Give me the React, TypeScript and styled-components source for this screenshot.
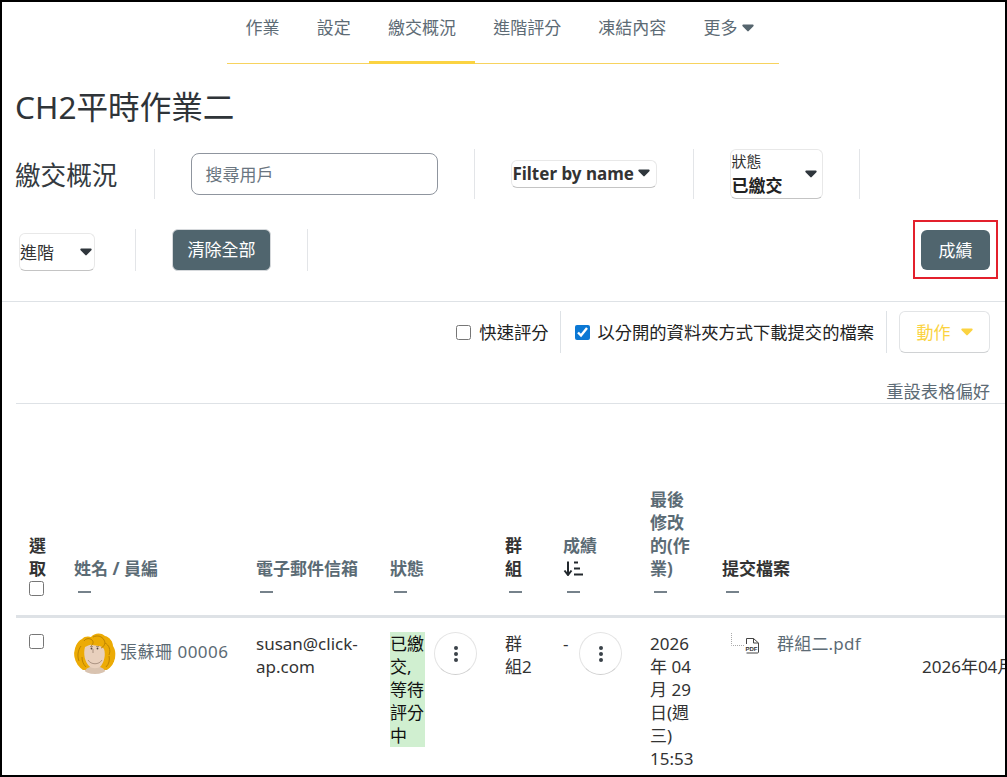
import React from 'react'
import styled, { createGlobalStyle } from 'styled-components'

const GlobalStyle = createGlobalStyle`
  html, body {
    margin: 0;
    padding: 0;
    background: #fff;
  }
  body {
    font-family: "Noto Sans", "Noto Sans CJK TC", sans-serif;
    font-size: 17px;
    line-height: 23px;
    color: #333;
  }
`

const TABS = ['作業', '設定', '繳交概況', '進階評分', '凍結內容']

function Caret({ className }: { className?: string }) {
  return (
    <svg className={className} viewBox="0 0 12 8" width="12" height="8" aria-hidden="true">
      <path d="M1.2 0.6h9.6c.8 0 1.2 1 .6 1.6L6.7 7.1c-.4.4-1 .4-1.4 0L.6 2.2C0 1.6.4.6 1.2.6z" fill="currentColor" />
    </svg>
  )
}

function Avatar() {
  return (
    <AvatarSvg viewBox="0 0 42 42" aria-hidden="true">
      <clipPath id="avatar-clip">
        <circle cx="21" cy="21" r="21" />
      </clipPath>
      <g clipPath="url(#avatar-clip)">
        <path d="M0 24C0 16 3 9 8 7c2-3 7-3 9-2 3-4 10-5 14-1 5 1 8 6 8 10 3 4 3 11 1 16-1 4-4 7-7 8H8C3 36 0 30 0 24z" fill="#ecab05" />
        <path d="M10 42c0-4 3-6 6-7h10c3 1 6 3 6 7z" fill="#d9c3b0" />
        <path d="M11 15c3-1 5-3 7-2 5 1 9 0 12 4 2 6 0 13-3 17-3 3-9 3-12 0-4-4-6-12-4-19z" fill="#e8d0bd" />
        <path d="M14 28c3 5 11 5 14 0" fill="none" stroke="#9c8474" strokeWidth="0.8" />
        <path d="M19 17v4M16 14.5h3M22 14.5h3" fill="none" stroke="#8c7565" strokeWidth="0.7" />
        <circle cx="17.5" cy="16.5" r="0.9" fill="#4f433b" />
        <circle cx="23.5" cy="16.5" r="0.9" fill="#4f433b" />
        <path d="M10 9c2-3 6-3 8-1 2 2 1 4-1 6M19 5c4-2 9-1 11 3 2 3 0 7-3 8M31 11c4 2 6 7 4 12M7 14c-3 4-4 10-2 15M35 24c1 4 0 8-3 11M8 25c0 4 1 7 4 10" fill="none" stroke="#b67f03" strokeWidth="0.9" />
      </g>
    </AvatarSvg>
  )
}

function Kebab() {
  return (
    <RoundButton type="button" aria-label="更多">
      <svg viewBox="0 0 4 16" width="4" height="16" aria-hidden="true">
        <circle cx="2" cy="2" r="2" fill="#3a4249" />
        <circle cx="2" cy="8" r="2" fill="#3a4249" />
        <circle cx="2" cy="14" r="2" fill="#3a4249" />
      </svg>
    </RoundButton>
  )
}

function SortIcon() {
  return (
    <SortSvg viewBox="0 0 20 15" aria-hidden="true">
      <path d="M5 0.5v13M1.5 9.5L5 14l3.5-4.5" fill="none" stroke="#22282d" strokeWidth="2" />
      <path d="M11 1.5h4M11 7.5h6M11 13.5h9" fill="none" stroke="#22282d" strokeWidth="1.8" />
    </SortSvg>
  )
}

function PdfTree() {
  return (
    <TreeSvg viewBox="0 0 30 22" aria-hidden="true">
      <path d="M1.5 1v12.5H14" fill="none" stroke="#aaa" strokeDasharray="1 1" />
      <path d="M16.5 12V6.5h7l5 4.5v9c0 .6-.4 1-1 1h-11" fill="none" stroke="#444" />
      <path d="M23.5 6.5v4.5h5" fill="none" stroke="#444" />
      <text x="15.5" y="18.5" fontSize="6" fontWeight="700" fill="#333" fontFamily="Liberation Sans, sans-serif">PDF</text>
    </TreeSvg>
  )
}

export default function App() {
  return (
    <Page>
      <GlobalStyle />
      <Tabs>
        {TABS.map((t, i) => (
          <Tab key={t} $active={i === 2}>{t}</Tab>
        ))}
        <Tab>
          更多 <NavCaret />
        </Tab>
      </Tabs>

      <Title>CH2平時作業二</Title>

      <FilterRow>
        <FilterGroup $start="0">
          <SubTitle>繳交概況</SubTitle>
        </FilterGroup>
        <FilterGroup>
          <SearchInput placeholder="搜尋用戶" />
        </FilterGroup>
        <FilterGroup>
          <BoldSelect type="button">
            Filter by name <SelectCaret />
          </BoldSelect>
        </FilterGroup>
        <FilterGroup>
          <StatusSelect type="button">
            <StatusLabel>
              狀態
              <strong>已繳交</strong>
            </StatusLabel>
            <StatusCaret />
          </StatusSelect>
        </FilterGroup>
      </FilterRow>

      <SecondRow>
        <FilterGroup $start="3px" $end="40px">
          <PlainSelect type="button">
            進階 <SelectCaret />
          </PlainSelect>
        </FilterGroup>
        <FilterGroup>
          <DarkButton type="button">清除全部</DarkButton>
        </FilterGroup>
        <GradeWrap>
          <GradeButton type="button">成績</GradeButton>
        </GradeWrap>
      </SecondRow>

      <Rule />

      <OptionsRow>
        <Option>
          <input type="checkbox" />
          快速評分
        </Option>
        <Option $divided>
          <input type="checkbox" defaultChecked />
          以分開的資料夾方式下載提交的檔案
        </Option>
        <ActionButton type="button">
          動作 <ActionCaret />
        </ActionButton>
      </OptionsRow>

      <ResetLink>重設表格偏好</ResetLink>

      <Table>
        <colgroup>
          <col width="45" />
          <col width="182" />
          <col width="134" />
          <col width="115" />
          <col width="58" />
          <col width="87" />
          <col width="72" />
          <col width="200" />
          <col width="400" />
        </colgroup>
        <thead>
          <tr>
            <Th>
              選取
              <HeadCheck type="checkbox" />
            </Th>
            <Th>
              <HeadLink>姓名 / 員編</HeadLink>
              <Dash />
            </Th>
            <Th>
              <HeadLink>電子郵件信箱</HeadLink>
              <Dash />
            </Th>
            <Th>
              <HeadLink>狀態</HeadLink>
              <Dash />
            </Th>
            <Th>
              群組
              <Dash />
            </Th>
            <Th>
              <HeadLink>成績</HeadLink>
              <SortIcon />
              <Dash />
            </Th>
            <Th>
              <HeadLink>最後修改的(作業)</HeadLink>
              <Dash />
            </Th>
            <Th>
              提交檔案
              <Dash />
            </Th>
            <Th />
          </tr>
        </thead>
        <tbody>
          <tr>
            <Td>
              <RowCheck type="checkbox" />
            </Td>
            <Td>
              <NameLink>
                <Avatar />
                <NameText>張蘇珊 00006</NameText>
              </NameLink>
            </Td>
            <Td>susan@click-ap.com</Td>
            <Td>
              <CellActions>
                <StatusBadge>已繳交, 等待評分中</StatusBadge>
                <Kebab />
              </CellActions>
            </Td>
            <Td>群組2</Td>
            <Td>
              <CellActions>
                <GradeValue>-</GradeValue>
                <Kebab />
              </CellActions>
            </Td>
            <Td>
              2026
              <br />年 04
              <br />月 29
              <br />日(週
              <br />三)
              <br />15:53
            </Td>
            <Td>
              <FileLine>
                <PdfTree />
                <FileLink>群組二.pdf</FileLink>
              </FileLine>
            </Td>
            <ModifiedTd>2026年04月29日(週三) 15:53</ModifiedTd>
          </tr>
        </tbody>
      </Table>
    </Page>
  )
}

const Page = styled.div`
  box-sizing: border-box;
  width: 1007px;
  height: 777px;
  border: 2px solid #000;
  overflow: hidden;
`

const Tabs = styled.nav`
  display: flex;
  width: 552px;
  height: 62px;
  box-sizing: border-box;
  margin-left: 225px;
  border-bottom: 1px solid #f7d35e;
`

const Tab = styled.a<{ $active?: boolean }>`
  box-sizing: border-box;
  height: 62px;
  padding: 14px 18.6px 0;
  color: #5d6b75;
  white-space: nowrap;
  border-bottom: 3px solid ${(p) => (p.$active ? '#fbd341' : 'transparent')};
`

const NavCaret = styled(Caret)`
  color: #56656e;
  vertical-align: 2px;
`

const Title = styled.h1`
  margin: 23px 0 22px 13px;
  font-size: 31.6px;
  line-height: 40px;
  font-weight: 400;
  color: #2f3438;
`

const FilterRow = styled.div`
  display: flex;
  align-items: stretch;
  height: 50px;
  padding-left: 14px;
`

const SecondRow = styled(FilterRow)`
  height: 42px;
  margin-top: 30px;
  padding-right: 15px;
`

const FilterGroup = styled.div<{ $start?: string; $end?: string }>`
  display: flex;
  align-items: center;
  padding-left: ${(p) => p.$start ?? '36px'};
  padding-right: ${(p) => p.$end ?? '36px'};
  border-right: 1px solid #e3e5e8;
`

const SubTitle = styled.h2`
  margin: 3px 1px 0 -1px;
  font-size: 25.6px;
  line-height: 32px;
  font-weight: 400;
  color: #343a40;
`

const SearchInput = styled.input`
  box-sizing: border-box;
  width: 247px;
  height: 42px;
  padding: 1px 13px 0;
  border: 1px solid #8f959e;
  border-radius: 8px;
  font: inherit;
  color: #333;
  &::placeholder {
    color: #6a7580;
    opacity: 1;
  }
`

const SelectBase = styled.button`
  display: flex;
  align-items: center;
  box-sizing: border-box;
  padding: 0;
  background: #fff;
  border: 1px solid #e8e8e8;
  border-bottom-color: #c4c4c4;
  border-radius: 6px;
  font: inherit;
  color: #333;
`

const BoldSelect = styled(SelectBase)`
  width: 146px;
  height: 28px;
  padding: 0 0 2px 0;
  font-weight: 700;
  gap: 4px;
  white-space: nowrap;
`

const SelectCaret = styled(Caret)`
  color: #2f363c;
`

const StatusSelect = styled(SelectBase)`
  justify-content: space-between;
  width: 93px;
  height: 50px;
  padding: 0 5px 0 0;
`

const StatusLabel = styled.span`
  display: flex;
  flex-direction: column;
  align-items: flex-start;
  font-size: 15px;
  line-height: 22px;
  strong {
    margin-top: 1px;
    font-size: 17px;
    line-height: 25px;
    color: #222;
  }
`

const StatusCaret = styled(Caret)`
  color: #2f363c;
`

const PlainSelect = styled(SelectBase)`
  justify-content: space-between;
  align-self: flex-end;
  width: 76px;
  height: 38px;
  padding: 0 2px 0 0;
`

const DarkButton = styled.button`
  box-sizing: border-box;
  width: 99px;
  height: 42px;
  padding: 0 0 1px;
  background: #50656e;
  border: 1px solid #d6d9dc;
  border-radius: 6px;
  color: #fff;
  font: inherit;
`

const GradeWrap = styled.div`
  position: relative;
  display: flex;
  align-items: center;
  margin-left: auto;
  &::after {
    content: '';
    position: absolute;
    inset: -9px -8px -8px -8px;
    border: 2px solid #e3202c;
    pointer-events: none;
  }
`

const GradeButton = styled.button`
  box-sizing: border-box;
  width: 69px;
  height: 40px;
  padding: 0;
  background: #50656e;
  border: none;
  border-radius: 6px;
  color: #fff;
  font: inherit;
`

const Rule = styled.hr`
  margin: 30px 0 0;
  border: none;
  border-top: 1px solid #dee2e6;
`

const OptionsRow = styled.div`
  display: flex;
  justify-content: flex-end;
  align-items: stretch;
  height: 42px;
  margin-top: 9px;
  padding-right: 15px;
`

const Option = styled.label<{ $divided?: boolean }>`
  display: flex;
  align-items: center;
  gap: ${(p) => (p.$divided ? '7px' : '8px')};
  padding: 0 12px 0 ${(p) => (p.$divided ? '14px' : '0')};
  font-size: 17.3px;
  color: #222;
  white-space: nowrap;
  border-right: ${(p) => (p.$divided ? '1px solid #dee2e6' : 'none')};
  border-left: ${(p) => (p.$divided ? '1px solid #dee2e6' : 'none')};
  input {
    width: 15px;
    height: 15px;
    margin: 0;
    accent-color: #0b78d4;
  }
`

const ActionButton = styled.button`
  box-sizing: border-box;
  display: flex;
  align-items: center;
  justify-content: center;
  gap: 10px;
  width: 91px;
  margin-left: 12px;
  background: #fff;
  border: 1px solid #e2e4e6;
  border-bottom-color: #d0d2d4;
  border-radius: 6px;
  color: #fbd341;
  font: inherit;
`

const ActionCaret = styled(Caret)`
  color: #fbd341;
`

const ResetLink = styled.div`
  box-sizing: border-box;
  height: 51px;
  margin-left: 14px;
  padding: 27px 15px 0 0;
  font-size: 17.3px;
  text-align: right;
  color: #5d6b75;
  border-bottom: 1px solid #dee2e6;
`

const Table = styled.table`
  table-layout: fixed;
  width: 1293px;
  margin: 71px 0 0 14px;
  border-collapse: collapse;
`

const Th = styled.th`
  padding: 13px 13px 12px;
  text-align: left;
  vertical-align: bottom;
  font-weight: 700;
  color: #333;
  border-bottom: 3px solid #dee2e6;
`

const HeadLink = styled.a`
  display: block;
  color: #5b6b75;
`

const Dash = styled.span`
  display: block;
  width: 13px;
  height: 2px;
  margin: 10.5px 0 10.5px 4px;
  background: #76828b;
`

const HeadCheck = styled.input`
  display: block;
  width: 15px;
  height: 15px;
  margin: 1px 0 7px;
`

const SortSvg = styled.svg`
  display: block;
  box-sizing: border-box;
  width: 20px;
  height: 23px;
  padding: 4px 0;
`

const Td = styled.td`
  padding: 14px 13px 13px;
  vertical-align: top;
  color: #333;
`

const ModifiedTd = styled(Td)`
  padding-top: 37px;
  white-space: nowrap;
`

const RowCheck = styled.input`
  display: block;
  width: 15px;
  height: 15px;
  margin: 2px 0 0;
`

const NameLink = styled.a`
  display: flex;
  align-items: center;
  gap: 4px;
  color: #5d6b75;
  white-space: nowrap;
`

const NameText = styled.span`
  margin-bottom: 3px;
  letter-spacing: 0.5px;
`

const AvatarSvg = styled.svg`
  flex: none;
  width: 42px;
  height: 42px;
`

const CellActions = styled.div`
  display: flex;
  align-items: flex-start;
  gap: 9px;
`

const StatusBadge = styled.span`
  flex: none;
  width: 35px;
  background: #d0efd0;
  color: #111;
`

const GradeValue = styled.span`
  flex: none;
  width: 7px;
`

const RoundButton = styled.button`
  flex: none;
  display: flex;
  align-items: center;
  justify-content: center;
  box-sizing: border-box;
  width: 43px;
  height: 43px;
  padding: 0;
  background: #fff;
  border: 1px solid #e4e4e4;
  border-bottom-color: #cfcfcf;
  border-radius: 50%;
`

const FileLine = styled.div`
  display: flex;
  align-items: flex-start;
  gap: 17px;
  padding-left: 8px;
`

const TreeSvg = styled.svg`
  flex: none;
  width: 30px;
  height: 22px;
`

const FileLink = styled.a`
  color: #5d6b75;
  letter-spacing: 0.2px;
  white-space: nowrap;
`
